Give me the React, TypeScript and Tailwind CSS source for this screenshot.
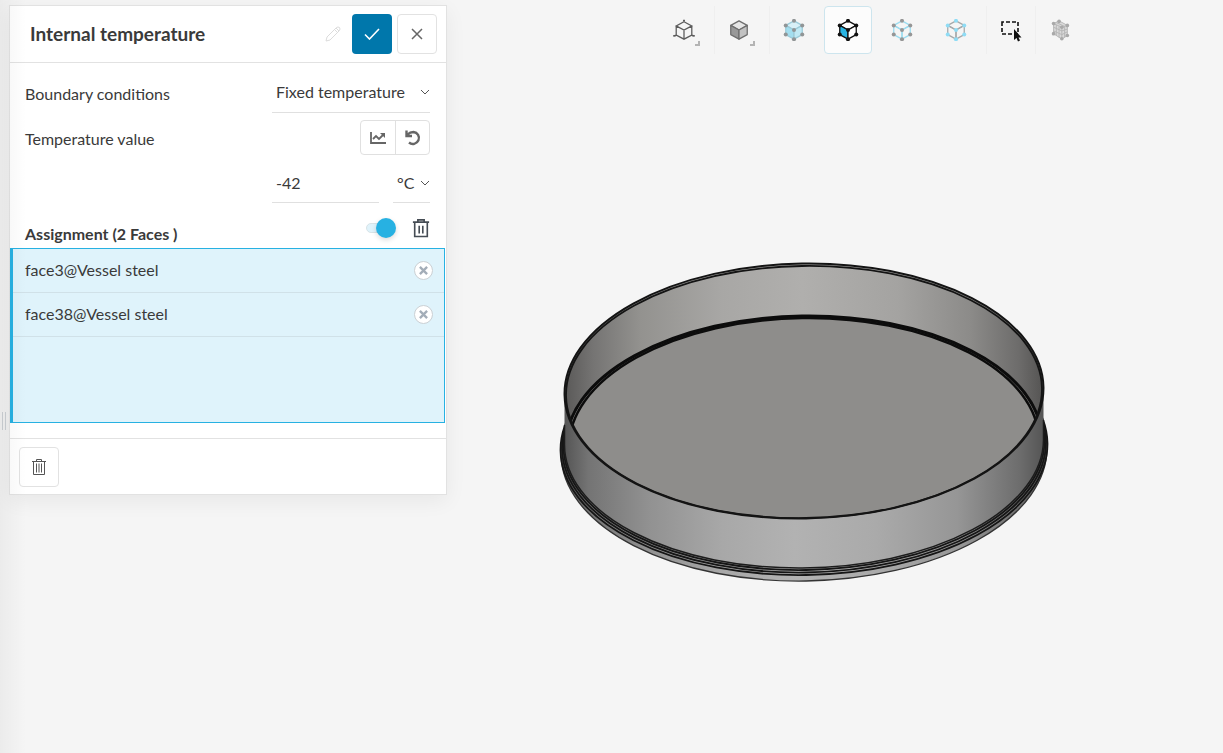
import { type ReactNode, useState } from "react";
import clsx from "clsx";

const FACES = ["face3@Vessel steel", "face38@Vessel steel"];

const CORNERS = [
  [12, 2],
  [21, 7],
  [21, 17],
  [12, 22],
  [3, 17],
  [3, 7],
  [12, 12],
];

type CubeProps = {
  line: string;
  top?: string;
  left?: string;
  right?: string;
  dots?: string;
  dotSize?: number;
};

const Cube = ({ line, top = "none", left = "none", right = "none", dots, dotSize = 2.2 }: CubeProps) => (
  <svg viewBox="0 0 24 24" className="size-[22px]" stroke={line} strokeWidth="1.4" strokeLinejoin="round">
    <path d="M12 2 21 7 12 12 3 7Z" fill={top} />
    <path d="M3 7 12 12V22L3 17Z" fill={left} />
    <path d="M21 7 12 12V22L21 17Z" fill={right} />
    {dots &&
      CORNERS.map(([x, y]) => (
        <circle key={`${x}-${y}`} cx={x} cy={y} r={dotSize} fill={dots} stroke="none" />
      ))}
  </svg>
);

const CornerMark = () => (
  <span className="absolute right-2 bottom-2 size-[5px] border-r-2 border-b-2 border-[#b4b4b4]" />
);

const TrashIcon = ({ className }: { className: string }) => (
  <svg viewBox="0 0 20 22" className={className} fill="none" stroke="currentColor">
    <path d="M1 4.5H19M6.500 4V2H13.500V4M3 5V20.500H17V5M8 8.500V17M12 8.500V17" />
  </svg>
);

const Chevron = () => (
  <svg viewBox="0 0 10 6" className="pointer-events-none h-[6px] w-[10px] shrink-0" fill="none" stroke="#555">
    <path d="M1 1 5 5 9 1" />
  </svg>
);

type ToolProps = {
  label: string;
  active?: boolean;
  divided?: boolean;
  children: ReactNode;
};

const Tool = ({ label, active, divided, children }: ToolProps) => (
  <div className={clsx("flex", divided && "border-l border-[#efefef]")}>
    <button
      type="button"
      aria-label={label}
      aria-pressed={active}
      className={clsx(
        "relative flex size-12 items-center justify-center rounded-[4px]",
        active && "border border-[#cde5ee] bg-[#fcfcfc]",
      )}
    >
      {children}
    </button>
  </div>
);

const Toolbar = () => (
  <div role="toolbar" aria-label="View and selection" className="flex gap-[6px]">
    <Tool label="Wireframe">
      <svg viewBox="0 0 24 24" className="size-[22px]" fill="none" stroke="#5c5c5c" strokeWidth="1.400">
        <path d="M12 3 20.500 7.500 12 12 3.500 7.500ZM3.500 7.500V17.500L12 22 20.500 17.500V7.500M12 12V22M12 3V1M3.500 17.500 1 18.500M20.500 17.500 23 18.500" />
        <path d="M11 1.500H13M0 18.500H3M21 18.500H24" />
      </svg>
      <CornerMark />
    </Tool>
    <Tool label="Solid" divided>
      <Cube line="#6f6f6f" top="#e6e6e6" left="#989898" right="#c2c2c2" />
      <CornerMark />
    </Tool>
    <Tool label="Select volumes" divided>
      <Cube line="#9ccbd9" top="#d8f0f7" left="#a3deef" right="#c0e9f4" dots="#919596" />
    </Tool>
    <Tool label="Select faces" active>
      <Cube line="#111" top="#fff" left="#29b4e2" right="#fff" dots="#111" />
    </Tool>
    <Tool label="Select edges">
      <Cube line="#9bdcf0" dots="#969696" />
    </Tool>
    <Tool label="Select vertices">
      <Cube line="#a5a9aa" dots="#8fdcf5" />
    </Tool>
    <div className="flex">
      <Tool label="Box select" divided>
        <svg viewBox="0 0 22 24" className="h-6 w-[22px]">
          <path
            d="M2 4H18V16H2Z"
            fill="none"
            stroke="#111"
            strokeWidth="1.600"
            strokeDasharray="4 2"
            strokeDashoffset="2"
          />
          <path d="M14 11V22L16.500 20 18 23.500 20 22.500 18.500 19.500H21.500Z" fill="#111" />
        </svg>
      </Tool>
      <Tool label="Mesh" divided>
        <svg viewBox="0 0 24 24" className="size-[22px]" fill="#d9d9d9" stroke="#b5b5b5">
          <path d="M5 5 11 2 20 7V18L14 22 5 16Z" />
          <path d="M5 5 14 9 20 7M14 9V22M5 9 14 13 20 11M5 13 14 17 20 14M8 4 17 8V20M8 6.500V18M11 8V20" fill="none" />
          <g fill="#a9a9a9" stroke="none">
            <circle cx="11" cy="2.500" r="2" />
            <circle cx="5" cy="5" r="2" />
            <circle cx="20" cy="7" r="2" />
            <circle cx="14" cy="9" r="2" />
            <circle cx="20" cy="18" r="2" />
            <circle cx="14" cy="21.500" r="2" />
            <circle cx="5" cy="16" r="2" />
          </g>
        </svg>
      </Tool>
    </div>
  </div>
);

const Vessel = () => (
  <svg viewBox="0 0 490 322" className="w-full max-w-[490px]" role="img" aria-label="Vessel model">
    <defs>
      <linearGradient id="outer">
        <stop offset="0" stopColor="#555" />
        <stop offset="0.05" stopColor="#747474" />
        <stop offset="0.18" stopColor="#929292" />
        <stop offset="0.33" stopColor="#a8a8a8" />
        <stop offset="0.48" stopColor="#b2b2b2" />
        <stop offset="0.65" stopColor="#aaaaaa" />
        <stop offset="0.82" stopColor="#969696" />
        <stop offset="0.95" stopColor="#6d6d6d" />
        <stop offset="1" stopColor="#555" />
      </linearGradient>
      <linearGradient id="inner">
        <stop offset="0" stopColor="#5a5958" />
        <stop offset="0.06" stopColor="#757473" />
        <stop offset="0.16" stopColor="#93928f" />
        <stop offset="0.33" stopColor="#a8a7a5" />
        <stop offset="0.5" stopColor="#b0afad" />
        <stop offset="0.7" stopColor="#a4a3a1" />
        <stop offset="0.85" stopColor="#8c8b89" />
        <stop offset="0.95" stopColor="#6d6c6b" />
        <stop offset="1" stopColor="#555453" />
      </linearGradient>
      <clipPath id="rim">
        <ellipse cx="245" cy="131" rx="239" ry="127" transform="rotate(-0.9 245 131)" />
      </clipPath>
    </defs>
    <g fill="url(#outer)" stroke="#161616" strokeWidth="1.800">
      <ellipse cx="245" cy="191" rx="243" ry="130" transform="rotate(-0.9 245 191)" stroke="#333" strokeWidth="1.300" />
      <ellipse cx="245" cy="187" rx="243.500" ry="128" transform="rotate(-0.9 245 187)" />
      <ellipse cx="245" cy="185" rx="242" ry="127.500" transform="rotate(-0.9 245 185)" />
      <ellipse cx="245" cy="183.500" rx="240.500" ry="126.500" transform="rotate(-0.9 245 183.500)" />
    </g>
    <path d="M5.500 134V184A239.500 126 -0.9 0 0 484.500 180V128Z" fill="url(#outer)" />
    <path d="M5.500 165V184A239.500 126 -0.9 0 0 484.500 180V160" fill="none" stroke="#1c1c1c" strokeWidth="1.500" />
    <ellipse cx="245" cy="131" rx="239" ry="127" transform="rotate(-0.9 245 131)" fill="url(#inner)" />
    <g clipPath="url(#rim)">
      <ellipse
        cx="245"
        cy="183"
        rx="238"
        ry="127"
        transform="rotate(-0.9 245 183)"
        fill="#8e8d8b"
        stroke="#0c0c0c"
        strokeWidth="3"
      />
      <ellipse
        cx="245"
        cy="184"
        rx="235"
        ry="126"
        transform="rotate(-0.9 245 184)"
        fill="none"
        stroke="#0c0c0c"
        strokeWidth="2.500"
      />
    </g>
    <g fill="none" stroke="#141414">
      <ellipse cx="245" cy="131" rx="239.500" ry="127.500" transform="rotate(-0.9 245 131)" strokeWidth="2" />
      <ellipse cx="245" cy="132" rx="238" ry="126" transform="rotate(-0.9 245 132)" strokeWidth="1.800" />
    </g>
  </svg>
);

const Panel = () => {
  const [active, setActive] = useState(true);

  return (
    <aside className="flex w-[438px] shrink-0 flex-col border border-[#e2e2e2] bg-white shadow-[0_6px_20px_rgba(0,0,0,0.06)]">
      <header className="flex h-[57px] items-center border-b border-[#e2e2e2] pr-[9px] pl-5">
        <h1 className="flex-1 text-[19px]/6 font-bold">Internal temperature</h1>
        <button type="button" aria-label="Rename" className="mr-[7px] flex size-6 items-center justify-center text-[#dcdcdc]">
          <svg viewBox="0 0 16 16" className="size-4" fill="none" stroke="currentColor">
            <path d="M1 15 2 11 11.500 1.500Q13 .5 14.500 1.500 15.500 3 14.500 4.500L5 14ZM9.500 3.500 12.500 6.500M11 2 14 5" />
          </svg>
        </button>
        <button
          type="button"
          aria-label="Apply"
          className="mr-[5px] flex size-10 items-center justify-center rounded-[4px] bg-[#0077ab]"
        >
          <svg viewBox="0 0 16 12" className="h-3 w-4" fill="none" stroke="#fff" strokeWidth="1.600">
            <path d="M1 6.500 5.500 11 15 1" />
          </svg>
        </button>
        <button
          type="button"
          aria-label="Close"
          className="flex size-10 items-center justify-center rounded-[4px] border border-[#e2e2e2]"
        >
          <svg viewBox="0 0 12 12" className="size-3" fill="none" stroke="#666" strokeWidth="1.500">
            <path d="M1 1 11 11M11 1 1 11" />
          </svg>
        </button>
      </header>

      <div className="flex flex-col pr-4 pl-[15px]">
        <div className="mt-[9px] flex h-[41px] items-center justify-between">
          <label htmlFor="condition" className="pt-[2px]">
            Boundary conditions
          </label>
          <div className="flex h-full w-[158px] items-center border-b border-[#e0e0e0]">
            <select id="condition" className="w-full appearance-none bg-transparent pl-1 outline-none">
              <option>Fixed temperature</option>
            </select>
            <Chevron />
          </div>
        </div>
        <div className="mt-[7px] flex h-[35px] items-center justify-between">
          <label htmlFor="temperature" className="pt-[2px]">
            Temperature value
          </label>
          <div className="flex h-full divide-x divide-[#e0e0e0] rounded-[4px] border border-[#e0e0e0] text-[#666]">
            <button type="button" aria-label="Value table" className="flex w-[35px] items-center justify-center">
              <svg viewBox="0 0 16 14" className="h-[14px] w-4" fill="none" stroke="currentColor" strokeWidth="1.800">
                <path d="M1 1V12H16M3 8 6 5 9 8 13 4" />
                <path d="M10 2H15V7Z" fill="currentColor" stroke="none" />
              </svg>
            </button>
            <button type="button" aria-label="Reset value" className="flex w-[33px] items-center justify-center">
              <svg viewBox="0 0 16 16" className="size-4" fill="none" stroke="currentColor" strokeWidth="2.400">
                <path d="M2.500 4.500Q5 2 8.500 2A6 6 0 1 1 4 12.500M1.500 .5V6H7" />
              </svg>
            </button>
          </div>
        </div>
        <div className="mt-2 flex h-10 justify-end gap-[14px]">
          <input
            id="temperature"
            defaultValue="-42"
            className="w-[107px] border-b border-[#e0e0e0] bg-transparent pl-1 outline-none"
          />
          <div className="flex w-[37px] items-center border-b border-[#e0e0e0]">
            <select aria-label="Unit" className="w-full appearance-none bg-transparent pl-1 outline-none">
              <option>°C</option>
            </select>
            <Chevron />
          </div>
        </div>
        <div className="flex h-[45px] items-center">
          <h2 className="flex-1 pt-4 font-bold">Assignment (2 Faces )</h2>
          <label className="mt-1 flex w-[30px] items-center">
            <input
              type="checkbox"
              aria-label="Pick faces"
              checked={active}
              onChange={(e) => setActive(e.target.checked)}
              className="peer sr-only"
            />
            <span className="h-[10px] w-5 shrink-0 rounded-full border border-[#d8e4e8] bg-[#e0f3fb]" />
            <span className="-ml-[10px] size-5 shrink-0 rounded-full bg-[#27b1e2] shadow-[0_2px_5px_rgba(0,0,0,0.15)]" />
          </label>
          <button type="button" aria-label="Clear assignment" className="mt-1 ml-4 text-[#454c54]">
            <TrashIcon className="h-5 w-[18px] stroke-[1.800]" />
          </button>
        </div>
      </div>

      <ul className="mr-px h-[175px] border border-l-[3px] border-[#27b1e2] bg-[#dff3fb]">
        {FACES.map((face) => (
          <li key={face} className="flex h-11 items-center justify-between border-b border-[#d0e1e8] pr-[11px] pl-3">
            <span className="pb-[2px]">{face}</span>
            <button
              type="button"
              aria-label={`Remove ${face}`}
              className="flex size-[19px] items-center justify-center rounded-full border border-[#cbd0d4] bg-white"
            >
              <svg viewBox="0 0 10 10" className="size-[9px]" stroke="#a3adb8" strokeWidth="2.600">
                <path d="M1 1 9 9M9 1 1 9" />
              </svg>
            </button>
          </li>
        ))}
      </ul>

      <footer className="mt-[15px] border-t border-[#e2e2e2] px-[9px] pt-2 pb-[7px]">
        <button
          type="button"
          aria-label="Delete"
          className="flex size-10 items-center justify-center rounded-[4px] border border-[#e2e2e2] text-[#555]"
        >
          <svg viewBox="0 0 16 18" className="h-[18px] w-4" fill="none" stroke="currentColor">
            <path d="M1 3.500H15M5.500 3V1.500H10.500V3M2.500 4V16.500H13.500V4M5.500 5.500V14.500M8 5.500V14.500M10.500 5.500V14.500" />
          </svg>
        </button>
      </footer>
    </aside>
  );
};

const App = () => (
  <div className="relative flex min-h-screen items-stretch bg-[#f5f5f5] font-[Lato,sans-serif] text-[16px]/5 text-[#3a3a3a]">
    <div className="w-[9px] shrink-0 pt-[412px] pl-[2px]">
      <div className="h-[18px] w-1 border-x border-[#cfd3d8]" />
    </div>
    <div className="flex shrink-0 items-start pt-[5px]">
      <Panel />
    </div>
    <main className="flex min-w-0 flex-1 flex-col pt-[6px]">
      <div className="flex justify-center pl-[74px]">
        <Toolbar />
      </div>
      <div className="flex justify-center pt-[206px] pr-[62px]">
        <Vessel />
      </div>
    </main>
    <div className="pointer-events-none absolute inset-y-0 left-0 w-[26px] bg-linear-to-r from-black/4 to-transparent" />
  </div>
);

export default App;
